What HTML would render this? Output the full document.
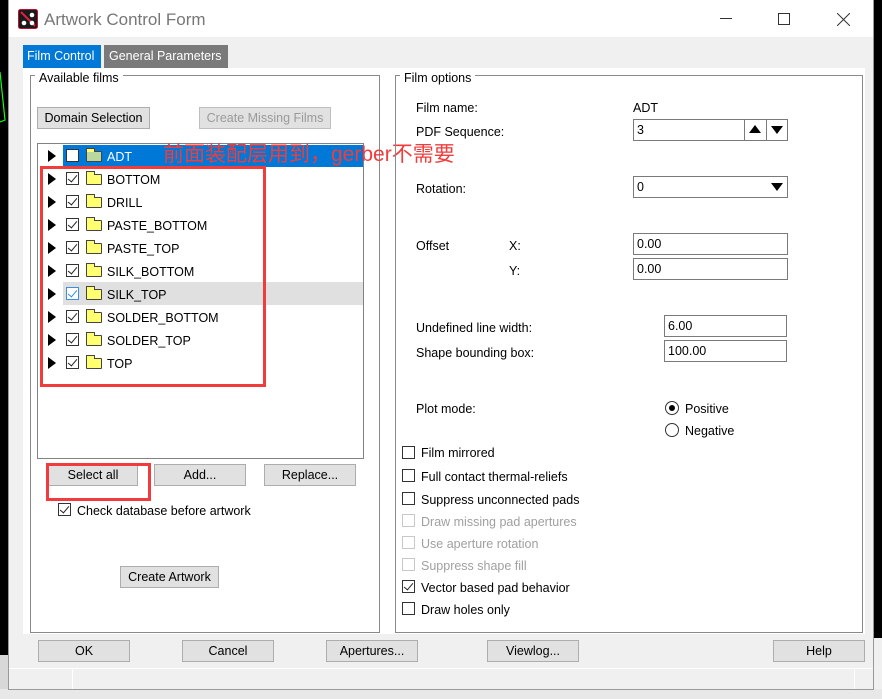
<!DOCTYPE html>
<html><head><meta charset="utf-8"><style>
*{margin:0;padding:0;box-sizing:border-box}
body{width:882px;height:699px;overflow:hidden;background:#f0f0f0;font-family:"Liberation Sans","Noto Sans CJK SC",sans-serif;font-size:12.5px;color:#000;position:relative}
.a{position:absolute;white-space:nowrap}
.t{position:absolute;white-space:nowrap;line-height:16px;margin-top:1px}
.btn{position:absolute;background:#e1e1e1;border:1px solid #adadad;text-align:center;line-height:21px;height:22px}
.inp{position:absolute;background:#fff;border:1px solid #7a7a7a;height:22px;line-height:21px;padding-left:3px}
.cb{position:absolute;width:13px;height:13px;border:1px solid #333;background:#fff}
.cb.d{border-color:#c8c8c8}
.cb.k::after{content:"";position:absolute;left:3px;top:0px;width:4px;height:8px;border:solid #222;border-width:0 1.3px 1.3px 0;transform:rotate(40deg)}
.cb.b{border-color:#3a8ee6}.cb.b::after{border-color:#3a8ee6}
.tri{position:absolute;width:0;height:0;border-top:6px solid transparent;border-bottom:6px solid transparent;border-left:8px solid #000}
.fold{position:absolute;width:16px;height:11px;border:1px solid #444;background:#ffff70;border-radius:1px}
.fold::before{content:"";position:absolute;left:-1px;top:-4px;width:7px;height:3px;border:1px solid #444;border-bottom:none;background:#ffff70}
.grp{position:absolute;border:1px solid #8a8a8a}
.lg{position:absolute;background:#fff;padding:0 4px;line-height:14px;margin-top:1px}
.dis{color:#a0a0a0}
</style></head><body>
<div class="a" style="left:0;top:0;width:8px;height:655px;background:#000"></div>
<div class="a" style="left:874px;top:0;width:8px;height:638px;background:#000"></div>
<div class="a" style="left:0;top:655px;width:8px;height:44px;background:#d8d8d8"></div>
<div class="a" style="left:0;top:689px;width:882px;height:10px;background:#e8e8e8"></div>
<svg class="a" style="left:0;top:60px" width="8" height="140"><polyline points="0,12 5,60 0,62" stroke="#1f1" fill="none" stroke-width="1.2"/><polyline points="0,160 6,166 0,200" stroke="#1f1" fill="none" stroke-width="1.2"/></svg>
<div class="a" style="left:8px;top:0;width:866px;height:690px;background:#f0f0f0;border:1px solid #999;border-top:none"></div>
<div class="a" style="left:9px;top:0;width:864px;height:37px;background:#fff"></div>
<svg class="a" style="left:18px;top:9px" width="20" height="20"><rect x="0.5" y="0.5" width="19" height="19" rx="2" fill="#1a1a1a" stroke="#c01030"/><line x1="3" y1="3" x2="17" y2="17" stroke="#e02040" stroke-width="2"/><circle cx="6" cy="14" r="2.3" fill="#fff"/><circle cx="14" cy="6" r="2.3" fill="#fff"/><circle cx="14" cy="14" r="2.3" fill="#fff"/></svg>
<div class="t" style="left:44px;top:9px;font-size:17px;color:#777;line-height:20px">Artwork Control Form</div>
<div class="a" style="left:720px;top:18px;width:12px;height:1px;background:#333"></div>
<div class="a" style="left:778px;top:13px;width:12px;height:12px;border:1px solid #333"></div>
<svg class="a" style="left:837px;top:13px" width="13" height="13"><path d="M0 0L13 13M13 0L0 13" stroke="#333" stroke-width="1"/></svg>
<div class="t" style="left:23px;top:45px;width:78px;height:23px;background:#0078d7;color:#fff;line-height:23px;padding-left:4px;margin-top:0">Film Control</div>
<div class="t" style="left:104px;top:45px;width:124px;height:23px;background:#7a7a7a;color:#fff;line-height:23px;padding-left:5px;margin-top:0">General Parameters</div>
<div class="a" style="left:23px;top:68px;width:842px;height:566px;background:#fff"></div>
<div class="grp" style="left:30px;top:75px;width:350px;height:558px"></div>
<div class="lg" style="left:35px;top:70px">Available films</div>
<div class="btn" style="left:37px;top:107px;width:113px">Domain Selection</div>
<div class="btn dis" style="left:199px;top:107px;width:132px;border-color:#bfbfbf;color:#9a9a9a">Create Missing Films</div>
<div class="a" style="left:37px;top:143px;width:327px;height:316px;border:1px solid #828282;background:#fff"></div>
<div class="a" style="left:63px;top:145px;width:300px;height:22px;background:#0078d7"></div>
<div class="a" style="left:63px;top:282px;width:300px;height:23px;background:#e0e0e0"></div>
<div class="tri" style="left:48px;top:150px"></div><div class="cb" style="left:66px;top:149px"></div><div class="fold" style="left:86px;top:151px;background:#b8d8a0"></div><div class="t" style="left:107px;top:148px;color:#fff">ADT</div>
<div class="tri" style="left:48px;top:173px"></div><div class="cb k" style="left:66px;top:172px"></div><div class="fold" style="left:86px;top:174px"></div><div class="t" style="left:107px;top:171px">BOTTOM</div>
<div class="tri" style="left:48px;top:196px"></div><div class="cb k" style="left:66px;top:195px"></div><div class="fold" style="left:86px;top:197px"></div><div class="t" style="left:107px;top:194px">DRILL</div>
<div class="tri" style="left:48px;top:219px"></div><div class="cb k" style="left:66px;top:218px"></div><div class="fold" style="left:86px;top:220px"></div><div class="t" style="left:107px;top:217px">PASTE_BOTTOM</div>
<div class="tri" style="left:48px;top:242px"></div><div class="cb k" style="left:66px;top:241px"></div><div class="fold" style="left:86px;top:243px"></div><div class="t" style="left:107px;top:240px">PASTE_TOP</div>
<div class="tri" style="left:48px;top:265px"></div><div class="cb k" style="left:66px;top:264px"></div><div class="fold" style="left:86px;top:266px"></div><div class="t" style="left:107px;top:263px">SILK_BOTTOM</div>
<div class="tri" style="left:48px;top:288px"></div><div class="cb k b" style="left:66px;top:287px"></div><div class="fold" style="left:86px;top:289px"></div><div class="t" style="left:107px;top:286px">SILK_TOP</div>
<div class="tri" style="left:48px;top:311px"></div><div class="cb k" style="left:66px;top:310px"></div><div class="fold" style="left:86px;top:312px"></div><div class="t" style="left:107px;top:309px">SOLDER_BOTTOM</div>
<div class="tri" style="left:48px;top:334px"></div><div class="cb k" style="left:66px;top:333px"></div><div class="fold" style="left:86px;top:335px"></div><div class="t" style="left:107px;top:332px">SOLDER_TOP</div>
<div class="tri" style="left:48px;top:357px"></div><div class="cb k" style="left:66px;top:356px"></div><div class="fold" style="left:86px;top:358px"></div><div class="t" style="left:107px;top:355px">TOP</div>
<div class="t" style="left:163px;top:141px;font-size:21px;line-height:26px;color:#f03c3c">前面装配层用到，gerber不需要</div>
<div class="a" style="left:40px;top:166px;width:226px;height:221px;border:3px solid #f03c3c"></div>
<div class="btn" style="left:48px;top:464px;width:90px">Select all</div>
<div class="btn" style="left:154px;top:464px;width:92px">Add...</div>
<div class="btn" style="left:264px;top:464px;width:92px">Replace...</div>
<div class="a" style="left:46px;top:463px;width:105px;height:38px;border:3px solid #f03c3c"></div>
<div class="cb k" style="left:58px;top:503px"></div><div class="t" style="left:77px;top:502px">Check database before artwork</div>
<div class="btn" style="left:120px;top:566px;width:99px">Create Artwork</div>
<div class="grp" style="left:395px;top:75px;width:468px;height:558px"></div>
<div class="lg" style="left:400px;top:70px">Film options</div>
<div class="t" style="left:416px;top:99px">Film name:</div><div class="t" style="left:633px;top:99px">ADT</div>
<div class="t" style="left:416px;top:123px">PDF Sequence:</div>
<div class="inp" style="left:633px;top:119px;width:155px">3</div>
<div class="a" style="left:744px;top:120px;width:1px;height:20px;background:#7a7a7a"></div>
<div class="a" style="left:766px;top:120px;width:1px;height:20px;background:#7a7a7a"></div>
<div class="a" style="left:749px;top:125px;border-left:6px solid transparent;border-right:6px solid transparent;border-bottom:8px solid #000"></div>
<div class="a" style="left:771px;top:126px;border-left:6px solid transparent;border-right:6px solid transparent;border-top:8px solid #000"></div>
<div class="t" style="left:416px;top:180px">Rotation:</div>
<div class="inp" style="left:633px;top:176px;width:155px">0</div>
<div class="a" style="left:771px;top:183px;border-left:6px solid transparent;border-right:6px solid transparent;border-top:8px solid #000"></div>
<div class="t" style="left:416px;top:237px">Offset</div><div class="t" style="left:509px;top:237px">X:</div><div class="t" style="left:509px;top:262px">Y:</div>
<div class="inp" style="left:633px;top:233px;width:155px">0.00</div>
<div class="inp" style="left:633px;top:258px;width:155px">0.00</div>
<div class="t" style="left:416px;top:319px">Undefined line width:</div>
<div class="t" style="left:416px;top:344px">Shape bounding box:</div>
<div class="inp" style="left:664px;top:315px;width:123px">6.00</div>
<div class="inp" style="left:664px;top:340px;width:123px">100.00</div>
<div class="t" style="left:416px;top:400px">Plot mode:</div>
<div class="a" style="left:665px;top:401px;width:14px;height:14px;border:1px solid #333;border-radius:50%"></div><div class="a" style="left:669px;top:405px;width:6px;height:6px;background:#000;border-radius:50%"></div>
<div class="t" style="left:685px;top:400px">Positive</div>
<div class="a" style="left:665px;top:423px;width:14px;height:14px;border:1px solid #333;border-radius:50%"></div>
<div class="t" style="left:685px;top:422px">Negative</div>
<div class="cb" style="left:402px;top:446px"></div><div class="t" style="left:421px;top:444px">Film mirrored</div>
<div class="cb" style="left:402px;top:469px"></div><div class="t" style="left:421px;top:468px">Full contact thermal-reliefs</div>
<div class="cb" style="left:402px;top:492px"></div><div class="t" style="left:421px;top:491px">Suppress unconnected pads</div>
<div class="cb d" style="left:402px;top:514px"></div><div class="t dis" style="left:421px;top:513px">Draw missing pad apertures</div>
<div class="cb d" style="left:402px;top:536px"></div><div class="t dis" style="left:421px;top:535px">Use aperture rotation</div>
<div class="cb d" style="left:402px;top:558px"></div><div class="t dis" style="left:421px;top:557px">Suppress shape fill</div>
<div class="cb k" style="left:402px;top:580px"></div><div class="t" style="left:421px;top:579px">Vector based pad behavior</div>
<div class="cb" style="left:402px;top:602px"></div><div class="t" style="left:421px;top:601px">Draw holes only</div>
<div class="btn" style="left:38px;top:640px;width:92px">OK</div>
<div class="btn" style="left:182px;top:640px;width:92px">Cancel</div>
<div class="btn" style="left:326px;top:640px;width:92px">Apertures...</div>
<div class="btn" style="left:487px;top:640px;width:92px">Viewlog...</div>
<div class="btn" style="left:773px;top:640px;width:92px">Help</div>
<div class="a" style="left:9px;top:668px;width:864px;height:1px;background:#fff"></div>
<div class="a" style="left:72px;top:669px;width:1px;height:20px;background:#fff"></div>
<div class="a" style="left:854px;top:669px;width:1px;height:20px;background:#fff"></div>
</body></html>
